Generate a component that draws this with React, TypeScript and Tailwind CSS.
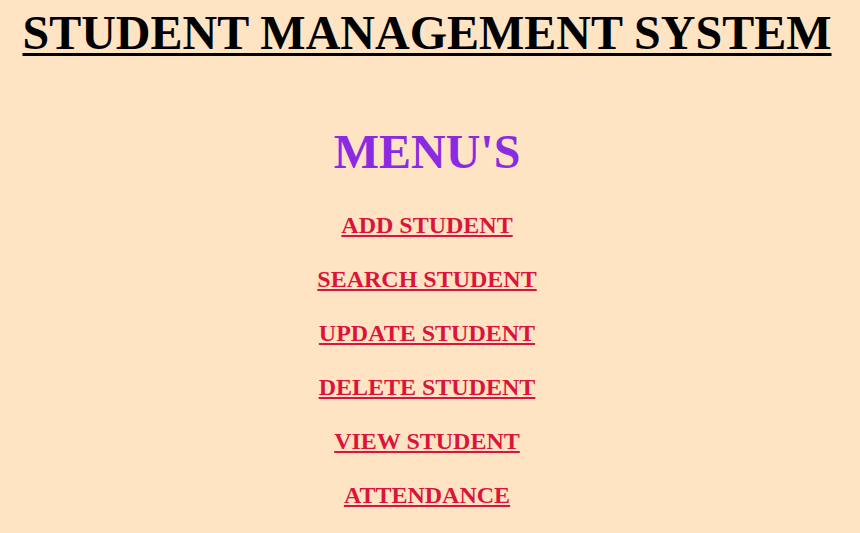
const links = [
  "ADD STUDENT",
  "SEARCH STUDENT",
  "UPDATE STUDENT",
  "DELETE STUDENT",
  "VIEW STUDENT",
  "ATTENDANCE",
];

const App = () => {
  return (
    <div className="min-h-[533px] bg-[#ffe4c4] pr-[6px] font-['Liberation_Serif','Times_New_Roman',serif] text-center">
      <h1 className="text-[48px] font-bold leading-[66px] underline decoration-[3px] underline-offset-[4px] text-black">
        STUDENT MANAGEMENT SYSTEM
      </h1>
      <h2 className="mt-[56px] text-[48px] font-bold leading-[60px] text-[#8a2be2]">
        MENU'S
      </h2>
      <div className="mt-[29px] flex flex-col items-center gap-[26px]">
        {links.map((l) => (
          <a
            key={l}
            href="#"
            className="text-[24px] font-bold leading-[28px] text-[#dc143c] underline decoration-[2px] underline-offset-[2px]"
          >
            {l}
          </a>
        ))}
      </div>
    </div>
  );
};

export default App;
